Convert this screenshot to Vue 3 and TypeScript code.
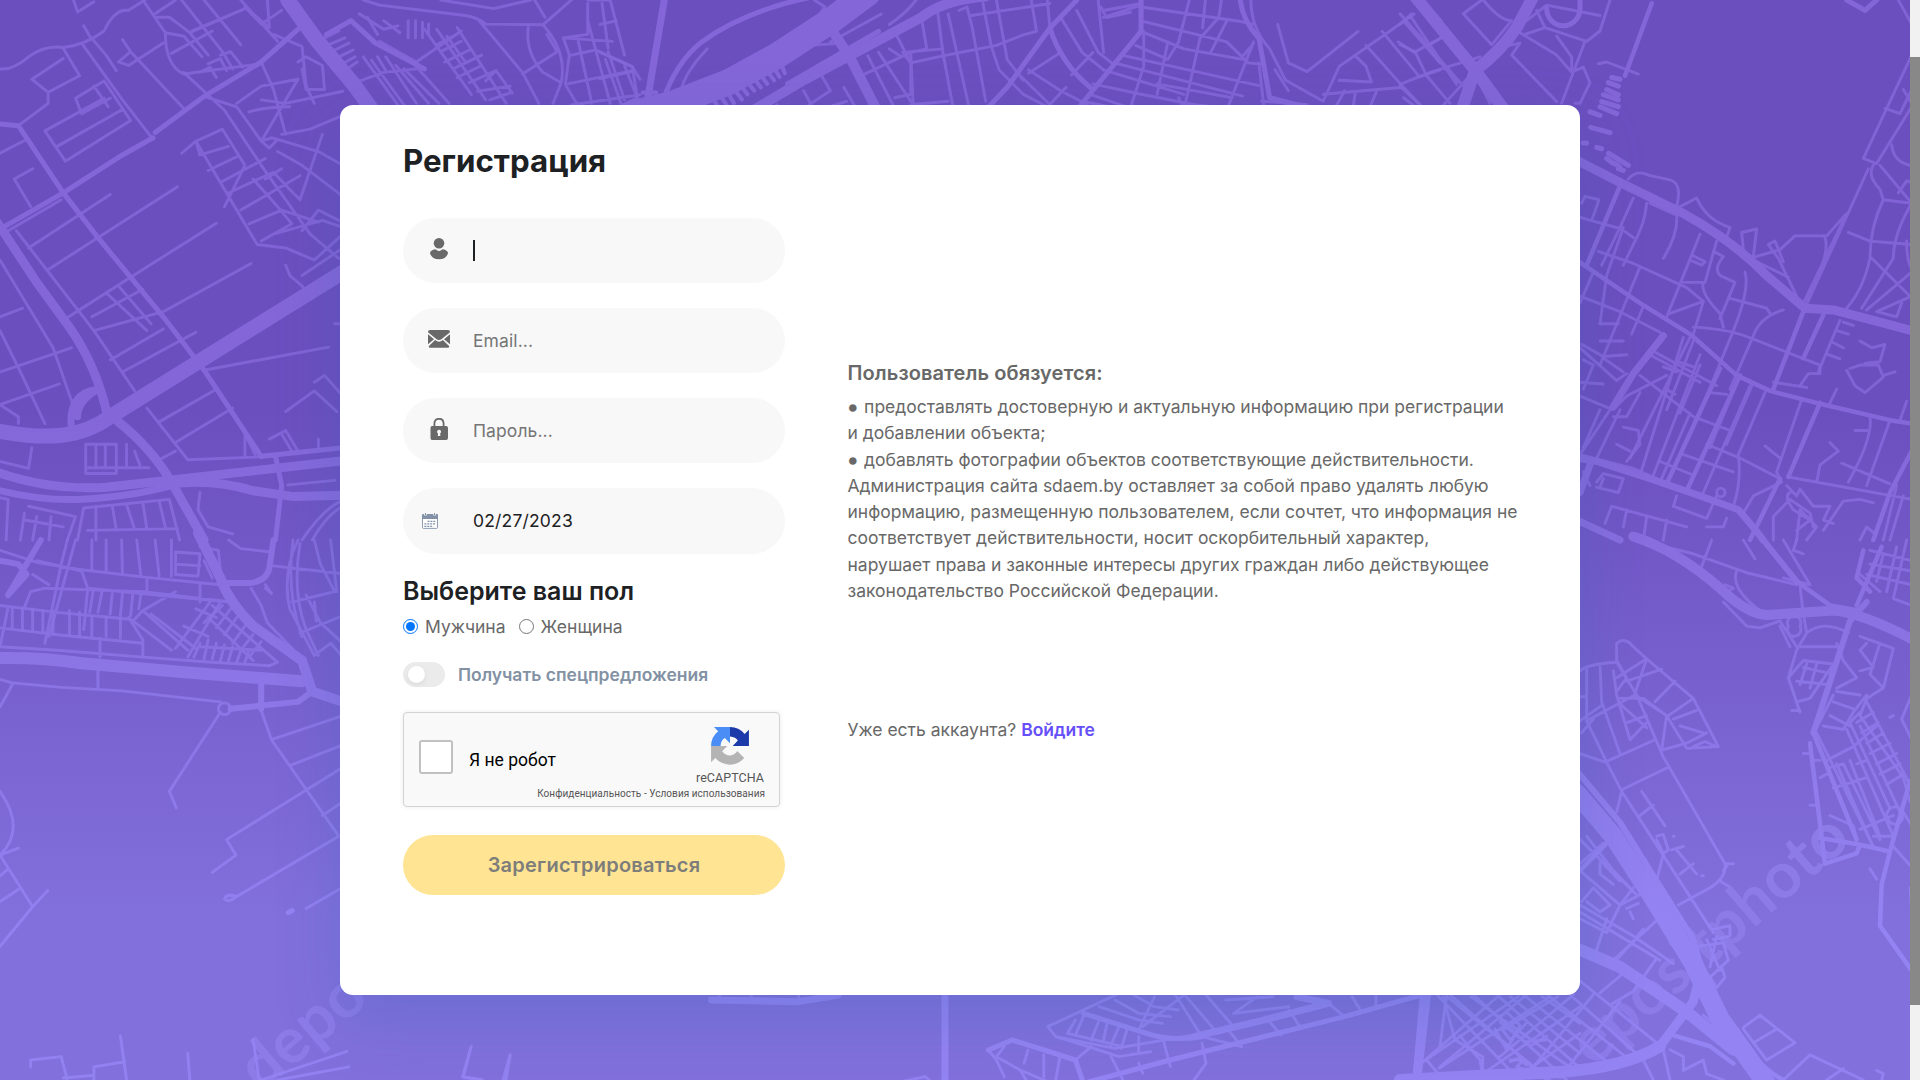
<script setup lang="ts">
import { ref } from 'vue'

interface Road { w: number; d: string }
interface Sheet { at: string; roads: Road[] }

const gender = ref('m')
const rules = [
  { dot: true, text: 'предоставлять достоверную и актуальную информацию при регистрации' },
  { dot: false, text: 'и добавлении объекта;' },
  { dot: true, text: 'добавлять фотографии объектов соответствующие действительности.' },
  { dot: false, text: 'Администрация сайта sdaem.by оставляет за собой право удалять любую' },
  { dot: false, text: 'информацию, размещенную пользователем, если сочтет, что информация не' },
  { dot: false, text: 'соответствует действительности, носит оскорбительный характер,' },
  { dot: false, text: 'нарушает права и законные интересы других граждан либо действующее' },
  { dot: false, text: 'законодательство Российской Федерации.' },
]

// The city map is split into sheets, each with its own local coordinate grid.
const sheets: Sheet[] = [
  {
    at: 'scale(.40816 .34439)',
    roads: [
      { w: 15, d: 'M705 0L775 115L870 250L915 325' },
      { w: 15, d: 'M-10 1250C120 1280 200 1270 270 1210L480 1055L840 790' },
      { w: 9, d: 'M-10 640L90 820L170 950Q235 1060 262 1200M410 1395L840 1338' },
      { w: 9, d: 'M-10 1370Q120 1425 260 1415L410 1395M420 1405Q520 1390 620 1425L720 1442L840 1438M290 1225Q370 1300 420 1400L500 1568' },
      { w: 7, d: 'M-10 1422Q100 1455 200 1450Q330 1440 420 1410M175 1245Q165 1140 240 1130M190 1210Q190 1165 240 1130' },
      { w: 5, d: 'M380 385L500 280L640 180L730 85M0 665L155 560L300 450L375 400M675 1325L690 1410L675 1568M800 100L860 60L920 125L1040 200M640 1325L840 1300M0 360L45 365L155 560L240 690L400 920L500 1075L640 1325' },
      { w: 3, d: 'M0 200Q30 205 70 165Q110 130 155 138Q210 130 255 90Q280 25 315 30L355 0M180 0L190 35L230 5M155 140L195 220L118 268L78 230L155 170M118 268L118 300L45 365M205 75L220 105L260 160L285 205M200 125L300 290L375 405M255 235L320 350L160 468L110 380L255 285M255 235L185 285L200 330L270 285M140 425L300 318M230 250L265 310M300 115L320 150L290 180L315 190L400 125M320 150L450 315M350 0L405 95Q405 190 450 215L640 185M405 95L450 105L495 165M385 50L415 50L465 95L600 25M465 95L510 160M420 155L520 90M445 0L545 150L570 200M500 0L590 130M590 0L680 120M600 20L640 70L690 30M655 0L660 80L620 40M380 40L430 0M470 90L590 30M490 210L515 195L530 225M510 185L540 170L555 205M540 160L565 150L595 195' },
      { w: 3, d: 'M450 210L550 320L640 480L760 680L830 750M500 280L580 310L640 410L730 230L640 250L580 300M640 180L670 260L700 390M670 100L740 135L750 250L770 300M730 180L750 165L790 190L795 260L750 260L740 200M640 290L700 300L840 265M690 390L760 375L840 335M610 325Q650 310 710 310M480 410L545 375L600 480L550 600M480 410L530 510L630 710L700 720L770 755L840 680M445 445L480 410L490 450L560 425M510 495L580 455M540 530L650 460M560 560L670 500L710 550L735 580L790 390M590 610L735 510M610 650L690 610L780 645M640 700L715 650L680 600L620 520M670 680L790 640L840 660M640 410L660 430L680 405L665 400L640 410M680 405L780 440L840 480M680 440L740 480L840 570M690 490L650 520M740 670L780 610L830 640M700 770L710 800L740 830L760 870M740 800L840 720' },
      { w: 3, d: 'M0 445L65 405M35 520L80 490M35 520L75 600M20 670L150 580M40 670L230 960L330 1135M70 720L270 565M115 785L435 542M155 930L320 805L530 648M230 960L400 905L615 765M270 1045L400 955M300 1080L480 965M260 850L360 960M290 830L370 940M225 920L350 840M300 1080L440 990M700 1195L770 1135L825 1195M770 1110L795 1090L840 1150M500 1075L805 1008M390 1225L530 1130M430 1285L570 1185M360 1185L460 1335L675 1325M600 1325L600 1260L625 1320M660 1275L700 1250L730 1310M690 1260L715 1310M780 1275L780 1300M390 1335L430 1310M0 920L55 895M0 755L130 1010L180 1180M0 960L50 1080L110 1230M0 1080L50 1060L175 1010M0 1175L145 1115M0 1175L45 1210L45 1230M0 1340L70 1360L78 1300' },
      { w: 3, d: 'M210 1290L285 1290L285 1375L210 1375ZM235 1290V1360M258 1290V1360M310 1290V1360M330 1310L345 1358M210 1358L365 1358M205 1475L415 1450L440 1568M205 1475L190 1568M235 1470V1568M275 1468L285 1540M310 1465L330 1538M350 1460L360 1538M390 1455L405 1530M215 1540L435 1535M0 1445L20 1450L15 1568M70 1470L185 1500L165 1568M60 1490L50 1568M90 1500L80 1568M125 1500L120 1568M60 1510L155 1530M490 1430L485 1480L510 1530L570 1550M705 1408L820 1395M740 1568Q790 1480 835 1455M765 1568Q800 1495 840 1470M820 940H840' },
      { w: 3, d: 'M795 110L830 90M805 130L845 110M815 148L855 125M825 168L865 145M835 188L870 165M845 205L875 180M890 165L975 305M910 175L990 305M925 165L945 205M945 165L1020 300M970 190L1050 300M990 200L1075 300M1010 180L1100 300M870 240L940 210L1020 200M880 40L940 85L975 75M900 50L925 100M940 60L980 95M1000 60V110M1018 60V110M1035 65V110M1050 70V100M930 120L1020 180L1130 90M1040 85L1155 275M1070 85L1190 290M1095 105L1140 180M1120 80L1180 190L1240 300M1070 130L1110 105M1080 150L1130 120M1090 180L1150 145M1110 200L1180 160M1120 225L1180 190M1150 240L1215 205M1170 265L1250 250M1190 235L1215 205L1255 270M1200 290L1250 270' },
      { w: 3, d: 'M890 0L930 15L1140 45Q1170 50 1190 70L1330 72L1400 0M1080 0L1210 25L1300 0M1170 55L1280 210L1320 300M1295 75Q1285 150 1330 210L1375 240L1355 300M1330 72Q1390 150 1375 240M1310 0L1335 50M1340 100L1365 150L1280 215M1440 0L1495 0L1530 160M1440 10L1440 100L1380 110L1395 160L1385 245L1415 305M1380 110L1500 120M1400 160L1460 145L1550 195L1568 230M1385 245L1550 205M1415 110L1450 300M1440 60L1495 300M1475 10L1490 140M1490 150L1530 290M1530 190L1560 280M1400 305L1568 275' },
    ],
  },
  {
    at: 'translate(0 540) scale(.40816 .34439)',
    roads: [
      { w: 12, d: 'M-10 343Q100 340 200 358L460 385L740 410' },
      { w: 10, d: 'M485 -20L540 110Q560 180 620 250L740 350L765 440L840 470' },
      { w: 6, d: 'M540 125H610Q655 120 660 80L670 0M0 60L45 70L65 100L20 160M100 0L20 160M640 420V490M565 490L730 470L765 440' },
      { w: 3, d: 'M0 30L90 65L190 85L370 110L540 130M185 0L120 280M165 0L150 70L110 300M90 60L200 90L215 140L205 260M60 195L75 150L110 140L350 150L565 180M80 100L120 130M0 190L140 210L320 230L420 320M20 195L0 310L140 320L350 340L520 355L660 365M360 110V150M490 130V180M215 140L560 180M420 0V105M225 0L225 90M260 0V95M298 0L300 100M335 0L345 105M380 0L390 105M430 35L490 40L485 105L430 100ZM430 70L490 75M350 205L430 150M350 205L460 320M370 215L480 315M460 340L540 180M430 315L515 180M450 250L510 280M480 200L530 225M315 225L350 290V340M0 255L140 275L350 300M245 285V340M330 230L350 205' },
      { w: 3, d: 'M30 200V255M55 200V260M80 200V262M105 205V265M130 205V270M170 205V275M195 210V280M228 150L220 210M250 150L240 210M275 155L270 215M300 155L295 220M325 160L320 220M345 160L340 200M225 225V280M260 225V280M295 230V285M490 310L640 320M510 290L500 345M530 300L520 345M550 305L540 350M570 310L560 350M590 320L580 355M610 320L600 355M490 300L475 340M520 190L680 355L660 365M510 225L620 350M545 190L500 240M565 200L530 255M580 225L550 275M600 250L570 300M620 275L590 320M640 295L610 340M560 0L590 25L665 35M490 20L535 30L540 90M500 60L520 110M615 140L640 190L655 240L720 320M650 140L665 155L650 130M670 75L840 98M730 0Q690 100 710 200L770 335M718 0Q700 150 740 280M735 10Q715 150 750 260L780 335M770 0L785 70L820 150M810 0L820 100L825 150M715 180L820 150M735 270L840 220M770 335L810 300L840 340M750 160L785 240L840 300M770 180L775 235' },
      { w: 3, d: 'M0 405L30 415L150 428L300 438L500 465L540 470M30 420L0 485M240 350V430M540 500L415 730L432 778M565 490A15 17 0 1 1 535 490A15 17 0 1 1 565 490M640 495L665 580L830 860M665 580L840 510M710 655L840 595M790 800L840 760M840 660L555 870L578 915L520 965M830 860L580 1035Q560 1055 550 1042Q555 1025 580 1035M750 1070L840 1008M0 730Q65 840 0 915L45 895M0 915L80 1065L0 1180M80 1065L117 1018M0 975L20 955M0 1050L45 1015M75 1530V1510L150 1500L165 1568M155 1562L225 1555M230 1568V1530L305 1515M295 1440L310 1568M460 1490L465 1568M620 1450L635 1568M640 1568L850 1485M680 1568L855 1530M1155 1470L1135 1560L1180 1568M1250 1495L1240 1568' },
      { w: 5, d: 'M706 1082L716 1076' },
    ],
  },
  {
    at: 'translate(1400 0) scale(.33333 .34439)',
    roads: [
      { w: 12, d: 'M45 -10L230 210L310 315M400 -10L350 80Q300 150 225 205L190 305' },
      { w: 9, d: 'M530 465L660 530L850 620Q1000 700 1100 800L1215 895L1300 900L1400 925L1535 960' },
      { w: 7, d: 'M530 1330L590 1340L750 1390L900 1440L1015 1480Q1060 1530 1090 1568M640 1180L700 1085L790 975M530 1510L660 1568M570 1350L540 1430' },
      { w: 4.5, d: 'M755 10L675 220M530 755L720 880L870 970L1010 1090L1110 1135L1250 1170L1470 1220L1535 1230M660 540L560 770M800 1405L960 1070M860 1425L1020 1090M1260 1170L1165 1385M1140 1390L1050 1568M1535 1310L1470 1430L1420 1568M1210 905L1120 1130M1270 915L1210 1040' },
      { w: 3, d: 'M250 0Q300 60 335 60L275 130L190 40L245 0M0 40L190 250M0 130L45 150L80 220L150 300M0 245L90 210L240 165M90 130L130 105M55 100L170 240M0 70L35 40M30 45L170 245M0 250L60 305M130 305L200 230M235 235L270 300M310 135L360 125L335 160L400 225L470 295M360 95L470 160L515 210M375 100L435 80L560 120L600 90L630 0M380 60L440 15L600 45M410 30L435 80M470 105L515 165V205M485 300L555 120M525 205L550 195L570 240L540 300L525 300M595 185L620 180L715 215' },
      { w: 5, d: 'M440 25A45 45 0 0 0 540 25V0M1340 0L1395 30L1430 0M635 225L660 230M625 240L655 250M620 260L655 275M610 275L655 290M605 295L655 310M600 310L650 330M570 325L600 335M572 370L630 385M550 415H560M590 428L605 432M625 445L685 480M620 460L640 475M645 475L660 485M655 490L670 495' },
      { w: 3, d: 'M685 520Q710 490 750 510L800 520Q850 525 830 600M830 605L890 575Q920 640 990 660L980 690M1030 725L1025 675L1070 665L1060 745M1050 750L1140 725L1185 685L1280 685L1340 620L1210 880M1535 160L1390 460L1430 475L1535 310M1455 315L1500 330L1535 260M1405 490L1215 895M1105 710L1135 750L1200 880M1105 710L1125 700L1150 760M1060 755L1165 805M1275 690Q1290 730 1240 830L1215 895M1420 480Q1400 510 1440 550L1450 580L1535 590M1440 480L1535 590M1475 420Q1480 470 1530 480M1495 560L1520 525L1535 530M1450 580Q1410 660 1410 750Q1390 840 1340 895M1345 675L1410 700L1535 710M1535 590Q1480 680 1480 750L1385 895M1410 745L1530 860M1535 790L1400 900M1535 860L1430 905L1490 920L1505 880M1520 700Q1520 760 1535 780M1510 260L1535 300M1495 0L1535 70' },
      { w: 3, d: 'M545 590L555 570L597 580L575 640M535 630L665 665L700 690M700 575L660 660L605 770M670 660L620 800L600 940M740 590Q735 650 700 710L670 770M750 590L830 625Q835 680 790 750M595 730L700 765L860 835L910 875M900 680L840 825L800 920M875 740L915 760L905 770L870 755M540 860L660 905L780 965M720 775L600 1060M730 890L695 970M540 880L580 790M810 910L910 875L880 970M910 820Q900 850 960 910L970 950M850 820H915L950 700M940 730L970 745Q940 780 960 800L1005 820L960 925M1035 790Q1050 840 1000 960L920 1150M985 865L1100 895L1110 910M880 950Q990 955 1060 985L1260 1060V1085H1225L1200 1120M1120 1110L1220 1125M1150 900Q1080 920 1060 975L990 1130M760 1020L950 1120M750 1030L900 1110M900 1030L760 1380M850 980L720 1380M870 980L690 1330M880 990L800 1190M790 1065L830 1080M800 1130L825 1145M835 1050L880 1065M900 1060L840 1200' },
      { w: 3, d: 'M540 1010L650 1105L680 1085M545 1000L610 1035L680 1030M550 1045L580 1060L550 1130M610 1040L670 1080M600 940L655 940M600 990H670M540 1110L610 1115M540 1150L640 1190L680 1150L800 1090M630 1190L540 1320M660 1190L590 1330M600 1190L550 1300M640 1210H680L720 1140M670 1240L715 1250L720 1290L680 1340M650 1290L690 1310M720 1090L880 1210L990 1250M870 1200L780 1400M930 1140L980 1145M920 1290L1020 1330L1140 1390M850 1320L1000 1370M780 1340L880 1380M1095 1140L1015 1320Q1025 1400 1000 1470M1020 1090L930 1300M1060 1110L980 1290M1050 1120L910 1430M1205 1160L1130 1370L1145 1400L1060 1440L1030 1490M1165 1385L1535 1450M1095 1295L1140 1330M1310 1130L1290 1170M1410 1210Q1420 1270 1345 1400M1470 1220L1400 1410M1325 1345L1470 1405M1290 1285L1315 1310L1260 1350L1250 1400M1365 1250H1405M1520 1165L1500 1220M1490 1410L1450 1568M1510 1440L1470 1568' },
      { w: 3, d: 'M1330 935L1360 945M1310 960L1345 970M1300 995L1330 1010M1285 1030L1320 1042M1320 930L1255 1080M1380 990L1415 1010L1455 1000L1440 1050L1395 1055M1350 1070L1380 1060L1435 1060L1450 1095L1395 1140L1365 1120L1340 1075M1450 1090L1485 1080M590 1400L610 1375L670 1390L655 1430L590 1415M610 1390L600 1415M615 1520L635 1470L860 1530M680 1480L670 1530M740 1500L730 1568M800 1510L790 1568M820 1470L830 1440M820 1470L920 1505L950 1440M920 1530L970 1530L980 1505M1160 1410L1190 1440L1200 1420L1240 1470L1290 1470L1270 1510L1300 1520M1120 1568V1500L1170 1450L1230 1490L1240 1530M1190 1568L1200 1480L1250 1530L1220 1568M1170 1430Q1150 1440 1180 1480L1230 1510L1190 1540M1270 1540L1330 1455L1380 1450L1420 1460M950 1430A10 10 0 1 0 975 1430A10 10 0 1 0 950 1430M1380 1568L1400 1530L1425 1550M540 1320L700 1360L780 1395M550 1370L570 1410' },
    ],
  },
  {
    at: 'translate(1400 540) scale(.33333 .34439)',
    roads: [
      { w: 19, d: 'M530 735L640 860L760 1040L880 1230L960 1390L1100 1580' },
      { w: 12, d: 'M0 1568L260 1555L480 1545Q680 1530 780 1470M540 1190L660 1240L860 1370L1000 1480' },
      { w: 10, d: 'M700 -10Q830 30 960 140Q1040 215 1100 218L1300 205Q1380 210 1540 290' },
      { w: 9, d: 'M80 1320L50 1568M780 1470L880 1340L900 1260' },
      { w: 6, d: 'M1090 0L1190 120M530 670L660 820L880 1160L900 1230M1400 180L1350 235L1240 560' },
      { w: 4.5, d: 'M1190 120L1290 190L1380 205M1240 560L1370 870M1230 590L1275 940L1370 910L1380 885L1470 905L1530 700M1390 30L1370 110L1410 150M1445 20L1370 190M1470 905L1445 1000L1440 1120L1535 1250M1260 865L1380 885M825 1440L930 1470L1000 1520M1010 1420Q1070 1530 1150 1568M640 860L540 960' },
      { w: 3, d: 'M540 380Q560 360 650 355L650 300Q675 280 700 310L740 345L880 460L955 600L860 605L800 510L705 450L560 525L620 645L665 730M650 355L710 450L790 630L975 940Q980 980 930 1010L835 1060M540 455H555M560 525V370M600 360L605 470L660 620M605 480L540 525M640 380L650 450L690 580M540 620L615 645L765 580M665 725L805 660M665 730L650 790M665 730L940 1140M705 445L740 345M680 410L785 375M650 400L740 345M765 470L825 410M805 510L880 460M820 520L890 495M840 540L910 560M800 510L785 610L860 590L920 560M650 350L680 400L650 440M660 460H730L800 510M665 480L740 545M680 530L740 510M690 580L740 530M880 600L915 585L950 600M545 560L580 520' },
      { w: 3, d: 'M725 730L795 830M720 800L760 770M770 860L790 855L805 900L790 910L770 870M790 910L770 990M830 900L890 970M840 970L880 940M815 900L850 890M905 975H910M820 860H822M985 940L970 960M980 940H1000M960 990L985 1005M1210 620H1225M1470 515L1480 510M1410 955L1430 985M1175 495H1200' },
      { w: 3, d: 'M710 0L880 40L1040 95L1190 130M935 0L900 90M1010 90Q990 140 1080 205M975 130L1000 140L980 150M970 180L1040 250L1080 255L1140 235M1030 0L1065 55M1150 0L1230 130L1150 110M1190 0L1180 30L1210 40M1140 250L1170 310M1210 215L1220 270L1190 320M1140 235L1190 310L1320 310M1165 250A20 20 0 1 0 1200 250A20 20 0 1 0 1165 250M1220 270Q1270 230 1345 270M1200 130L1210 220M1190 320L1165 400L1200 500M1165 400L1210 350L1300 360L1230 460L1190 470M1210 370L1300 390M1190 410L1290 420M1220 360L1200 420M1250 360L1230 430M1310 300L1330 350L1370 400L1310 430M1380 280L1480 315L1450 430L1400 460L1380 510L1510 690L1530 760M1400 300L1380 320L1420 370L1380 380M1440 300L1410 390L1450 430M1300 450L1250 545M1310 440L1380 450M1300 470L1360 490M1290 510L1350 540M1270 540L1330 550L1360 500L1400 450' },
      { w: 3, d: 'M1280 640L1360 600L1430 540M1340 550L1480 860M1380 540L1500 790M1380 500L1350 530L1470 780M1400 470L1535 720M1370 530L1420 500M1385 560L1435 530M1400 590L1450 560M1410 620L1470 590M1430 650L1490 620M1440 680L1500 650M1460 710L1510 680M1400 640L1370 650M1290 660L1330 650L1440 870M1260 690L1280 680M1300 720L1400 690M1250 560L1420 890M1310 650L1410 870M1350 640L1440 860M1380 840L1480 800M1370 870L1360 830L1290 800M1230 770H1250M1240 640H1260M1460 800A20 20 0 1 0 1510 800A20 20 0 1 0 1460 800M1510 790L1535 830M1480 890L1535 950M1535 450L1505 520L1535 580M1420 860L1480 860M1520 0L1480 170L1535 190M1400 100L1535 130M1410 70L1535 90M1450 40L1430 120M1490 20L1460 150M1380 100L1440 150M1410 30L1535 60M1530 1010L1535 1080' },
      { w: 3, d: 'M540 870L710 1030M560 860L640 960L700 1020M610 880L540 940M540 960L660 1060L700 1010M600 930L660 990M600 940V970L640 1000M545 1050L580 1010L630 1060L600 1080L560 1050M540 1060L700 1150L820 1230M540 1080L780 1220M620 1100L590 1190M770 1105L640 1220M730 1130L650 1220M770 1215L700 1310L630 1350M680 1250L600 1315M690 1080L700 1100M680 1070L715 1055M540 1100L620 1140L660 1060L720 1030M140 1320L120 1470M110 1320L330 1540M150 1320L440 1568M220 1320L500 1568M290 1320L560 1550M370 1320L640 1530M440 1320L690 1510M510 1320L720 1500M540 1280L770 1460M75 1510L300 1320M120 1530L380 1320M300 1500L520 1320M400 1530L580 1320M480 1560L660 1340M80 1510L130 1568M180 1440L240 1510L250 1568M280 1400L320 1370L360 1410L320 1480L285 1420M300 1400L390 1470L440 1440M330 1510L370 1510L350 1530L380 1540' },
      { w: 3, d: 'M890 1180L970 1170L985 1220L930 1270L890 1220M920 1160L960 1250M950 1150L930 1240M940 1130L990 1120V1150L940 1160M930 1270L950 1300L975 1270L965 1240M920 1340L980 1430M910 1380L1000 1450M1030 1415L1080 1380L1185 1460L1100 1510L1030 1420M1060 1460L1130 1420M1150 1568L1230 1495L1390 1568M1280 1568L1330 1535M1430 1540L1450 1550L1445 1568M790 1480L810 1568M810 1480L850 1500V1540L910 1510L920 1550L970 1568M730 1510L760 1568' },
    ],
  },
  {
    at: 'translate(600 0) scale(.5357 .3492)',
    roads: [
      { w: 26, d: 'M500 -20L430 60L330 160L240 235L130 300L60 325' },
      { w: 10, d: 'M720 -10Q640 0 600 50L380 230L270 330M430 80L465 160L520 325' },
      { w: 7, d: 'M120 0L85 320' },
      { w: 5, d: 'M400 -10Q270 30 190 120Q140 180 115 300M350 240L520 90M890 0L840 80L760 250L720 315M1195 0Q1200 60 1230 110L1250 280L1350 320M1530 0L1568 60M840 80Q860 180 915 250M1010 0L1010 90L890 315' },
      { w: 3, d: 'M200 140Q150 220 150 280M400 0L420 20L400 60L440 30M590 0Q570 40 540 70M525 40L430 120M390 130L440 125M630 30L640 150L660 315M600 50L610 140L580 150L585 315M650 40L690 315M670 30L685 20L695 80L720 290M690 45L840 10M715 10L730 130L745 200L790 270L840 310M740 0L760 170L790 230M805 0L815 90L790 100L740 130L640 160L580 180L565 150L640 140M550 90L580 180L580 270L550 280M520 150L580 290M500 160L550 310M540 140L560 160M490 215L580 150M580 300L650 290M380 260L400 315M415 220L430 260L390 300M455 250L480 315M410 315L460 290M330 300L340 315M860 50L900 150L940 200M890 30L930 150L955 180M780 210L840 300M800 200L860 260L910 300M835 0L840 80M860 150L800 210M920 150L880 215M870 250L830 315' },
      { w: 4, d: 'M340 190L345 210M325 195L335 220M313 205L325 230M300 215L312 240M288 225L300 250M275 235L288 260M263 245L275 270M250 255L265 285M238 265L250 295M225 275L238 305M212 285L222 312M80 265L105 265' },
      { w: 3, d: 'M930 0L940 150M940 30L1010 10M940 50L1010 15M935 20L945 50L990 35M1010 20L1190 60M1010 60L1170 120L1210 180L1240 185M1010 90L1090 140L1200 170M1000 130L1060 170L1080 120L1100 0M980 160L1230 245M960 180L1200 275M940 200L1090 270M920 240L1010 270L1110 300L1200 315M915 270L1000 315M900 290L980 315M1015 90V190L990 310M1130 0L1125 80M1160 0L1155 50L1120 110L1090 315M1170 60L1140 150M1060 120L1040 270M1220 120L1170 315M1190 60L1220 70M1200 160L1220 125M1040 240L1180 280M1080 280L1090 310M1215 0Q1215 80 1250 140L1280 230L1350 290L1380 190L1520 40M1265 70L1285 180L1320 205L1415 90M1230 180L1240 315M1260 200L1285 260M1380 230L1440 235L1430 190L1410 160M1430 130L1500 250L1350 270M1460 90L1530 220L1568 200M1500 60L1568 180M1490 120L1520 150L1568 110M1500 250L1540 315M1390 260L1370 315M1410 265L1405 315M1450 260L1435 315M1235 290L1320 300M1500 280L1530 315M0 150L60 190L70 280L30 310M0 225L60 205M0 70L30 60M10 170L40 300' },
    ],
  },
  {
    at: 'translate(340 980) scale(.7908 .3333)',
    roads: [
      { w: 7, d: 'M765 40V310M1370 40L1360 310M1080 170L1160 125L1250 70L1210 50M470 60L580 65L630 45' },
      { w: 5, d: 'M940 310L1050 240L1270 110L1390 30M940 100L1020 160Q1050 185 1090 170M820 210L850 180L930 240L940 310' },
      { w: 3, d: 'M480 45V65M520 45V65M580 45V65M985 40L895 140L905 170L980 205L1080 165M1000 40L1030 80L1060 90M980 60L1010 100L1050 110M960 80L1010 120L1040 130M930 120L920 160L990 200M940 110L930 165M960 120L950 180M970 130L965 185M985 140L975 195M995 150L988 205M905 170Q960 210 985 230L1025 215M1010 170V220M1015 140L1070 40M1055 40L1090 170M1070 50L1110 160M1030 50L1010 150M1095 45L1130 140M1090 170L1140 200L1120 140M1160 50L1130 100L1200 80M1120 60L1180 50M1170 110L1190 165M1200 90L1215 145M1250 70L1270 110M1280 50L1290 90M1310 45V80M1040 170L1050 260M1090 190L1095 250L1080 300M950 200L930 240M975 230L990 300M1010 250L1015 280M820 210L830 240L840 290M840 200L830 230L860 270L870 310M870 210L865 250M890 225V290M910 235L905 300M860 270L900 310M700 310L740 290L750 310M165 205L155 290L180 300M215 225L205 310M1395 50L1410 180L1445 230V310' },
      { w: 3, d: 'M1400 50L1530 300M1430 50L1560 270M1480 50L1568 220M1520 50L1568 130M1370 245L1490 50M1390 265L1530 50M1440 290L1568 80M1490 290L1568 160M1540 50L1470 150L1480 180L1500 130M1480 245L1490 235L1500 255M1500 185L1525 180' },
    ],
  },
]
</script>

<template>
  <main class="page">
    <svg class="map" viewBox="0 0 1920 1080" aria-hidden="true">
      <defs>
        <linearGradient id="lineTone" x1="0" y1="0" x2="0" y2="1">
          <stop offset="0" stop-color="#8466d8" />
          <stop offset=".38" stop-color="#8466d8" />
          <stop offset=".85" stop-color="#9483f2" />
          <stop offset="1" stop-color="#9483f2" />
        </linearGradient>
        <mask id="streets" maskUnits="userSpaceOnUse" x="0" y="0" width="1920" height="1080">
          <g fill="none" stroke="#fff" stroke-linecap="round" stroke-linejoin="round">
            <g v-for="(sheet, i) in sheets" :key="i" :transform="sheet.at">
              <path
                v-for="(road, j) in sheet.roads"
                :key="j"
                :d="road.d"
                :stroke-width="road.w === 3 ? 2.9 : road.w"
                :stroke-opacity="road.w === 3 ? 0.88 : 1"
                vector-effect="non-scaling-stroke"
              />
            </g>
          </g>
        </mask>
      </defs>
      <g class="watermark">
        <text transform="translate(371 1001) rotate(-40)">depo</text>
        <text transform="translate(1853 842) rotate(-41)">epositphoto</text>
      </g>
      <rect width="1920" height="1080" fill="url(#lineTone)" mask="url(#streets)" />
    </svg>

    <section class="card">
      <form class="form" @submit.prevent>
        <h1>Регистрация</h1>
        <label class="field">
          <svg class="ico" viewBox="0 0 22 22"><circle cx="11" cy="5.3" r="5.3" /><path d="M5.2 11.7Q7.8 10.9 8.5 12Q11 13.9 13.5 12Q14.2 10.9 16.8 11.7Q20 12.8 20 15.3Q18.2 21.2 11 21.3Q3.8 21.2 2 15.3Q2 12.8 5.2 11.7Z" /></svg>
          <span class="caret"></span>
        </label>
        <label class="field">
          <svg class="ico" viewBox="0 0 22 22"><path d="M0 4.2V4Q0 2 2 2H20Q22 2 22 4V4.2L14 10.7Q11 13.4 8 10.7ZM0 6.3L6 11.2L0 16.2ZM22 6.3L16 11.2L22 16.2ZM7.1 12.1Q11 15.6 14.9 12.1L21.3 18.2Q21 19.7 20 19.7H2Q1 19.7 .7 18.2Z" /></svg>
          <span class="hint">Email...</span>
        </label>
        <label class="field">
          <svg class="ico" viewBox="0 0 22 22"><path d="M6.4 9V5.7Q6.4 .8 11 .8Q15.6 .8 15.6 5.7V9" fill="none" stroke="#696969" stroke-width="1.8" /><path fill-rule="evenodd" d="M4 8H18Q20 8 20 10V20Q20 22 18 22H4Q2.5 22 2.5 20V10Q2.5 8 4 8ZM11 11.8A2 2 0 0 0 10 15.5L9.8 18H12.4L12.1 15.5A2 2 0 0 0 11 11.8Z" /></svg>
          <span class="hint">Пароль...</span>
        </label>
        <label class="field date">
          <svg class="cal" viewBox="0 0 16 16"><path d="M.5 2V14.3Q.5 15.4 1.5 15.4H14.5Q15.5 15.4 15.5 14.3V2" fill="#fff" stroke="#8291a8" stroke-width=".9" /><path d="M0 6V1.8Q0 1 1 1H2.2V2.5H4.7V1H11.3V2.5H13.8V1H15Q16 1 16 1.8V6Z" fill="#8291a8" /><path d="M3.5 0V2.2M12.5 0V2.2" stroke="#8291a8" /><path d="M5.5 8.3H13.8M2.4 10.8H13.8M2.4 13.3H11.2" fill="none" stroke="#8291a8" stroke-width="1.3" stroke-dasharray="2 .9" /></svg>
          <span class="value">02/27/2023</span>
        </label>
        <h2>Выберите ваш пол</h2>
        <div class="radios">
          <label><input v-model="gender" type="radio" value="m" /><span>Мужчина</span></label>
          <label><input v-model="gender" type="radio" value="f" /><span>Женщина</span></label>
        </div>
        <div class="offers"><span class="switch"><i></i></span><span class="offers-text">Получать спецпредложения</span></div>
        <div class="captcha">
          <span class="box"></span>
          <span class="robot">Я не робот</span>
          <div class="brand">
            <svg viewBox="0 0 64 64">
              <path d="M64 31.96A31 31 0 0 0 63.9 30.6V4.6L56.7 11.8A32 32 0 0 0 32 .1V15.9Q42 16.5 45.2 22.9L36.6 32H64Z" fill="#1c3aa9" />
              <path d="M32 .1H5L12.1 7.3A32 32 0 0 0 .1 32H16Q16.8 22 23.2 18.7L32 27.5Z" fill="#4a8df6" />
              <path d="M.1 32V59.2L7.3 52A32 32 0 0 0 56 52.4L44.2 40.6Q40.5 47.4 32 48Q23.5 47.6 18.8 40.8L27.5 32Z" fill="#b4b4b4" />
            </svg>
            <span class="brand-name">reCAPTCHA</span>
          </div>
          <span class="legal">Конфиденциальность - Условия использования</span>
        </div>
        <button type="submit">Зарегистрироваться</button>
      </form>

      <aside class="info">
        <h3>Пользователь обязуется:</h3>
        <p v-for="rule in rules" :key="rule.text"><span v-if="rule.dot" class="dot">●</span>{{ rule.text }}</p>
        <div class="login"><span>Уже есть аккаунта? </span><a>Войдите</a></div>
      </aside>
    </section>
    <div class="scroll"><i></i></div>
  </main>
</template>

<style>
html, body { margin: 0; overflow: hidden; }
</style>

<style scoped>
* { box-sizing: border-box; }
.page { position: relative; width: 1920px; height: 1080px; padding: 105px 340px 85px; overflow: hidden; background: linear-gradient(#6c4fbf 0%, #6c4fbf 38%, #8270dc 85%, #8270dc 100%); font-family: Inter, sans-serif; color: #1e2123; }
.map { position: absolute; inset: 0; width: 1920px; height: 1080px; }
.watermark { fill: #8d7be8; font: 700 64px Lato, sans-serif; text-anchor: end; }
.card { position: relative; display: flex; width: 1240px; height: 890px; padding: 0 62px 0 63px; border-radius: 13px; background: #fff; box-shadow: 0 25px 62px rgba(44, 100, 180, .25); }
.form { width: 382px; padding-top: 36px; }
h1 { height: 40px; margin: 0 0 37px; font-size: 31.25px; line-height: 40px; font-weight: 700; white-space: nowrap; }
.field { display: flex; align-items: center; height: 65px; margin-bottom: 25px; padding-left: 25px; border-radius: 33px; background: #f8f8f8; font-size: 17.5px; }
.ico { width: 22px; height: 22px; margin: 0 23px 3px 0; fill: #696969; }
.caret { width: 2px; height: 21px; background: #1e2123; }
.hint { color: #757575; letter-spacing: .1px; }
.date { height: 66px; margin-bottom: 0; padding-left: 19px; }
.cal { width: 16px; height: 16px; margin-right: 35px; }
.value { margin-bottom: 2px; letter-spacing: .18px; }
h2 { height: 30px; margin: 22px 0 0; font-size: 25px; line-height: 30px; font-weight: 600; white-space: nowrap; }
.radios { display: flex; height: 26px; margin-top: 7px; font-size: 17.5px; color: #686868; }
.radios label { display: flex; align-items: center; margin-right: 13px; }
.radios input { width: 15px; height: 15px; margin: 0 7px 0 0; accent-color: #0075ff; }
.offers { display: flex; align-items: center; height: 25px; margin-top: 23px; }
.switch { display: flex; align-items: center; width: 42px; height: 25px; padding-left: 5px; border-radius: 13px; background: #ebebeb; }
.switch i { width: 17px; height: 17px; border-radius: 50%; background: #fff; box-shadow: 0 2px 5px rgba(0, 0, 0, .08); }
.offers-text { margin-left: 13px; font-size: 17.5px; font-weight: 600; color: #8291a3; white-space: nowrap; }
.captcha { display: grid; grid-template-columns: 50px 1fr 70px; grid-template-rows: 70px 1fr; width: 377px; height: 95px; margin-top: 25px; padding: 0 14px 0 15px; border: 1px solid #d3d3d3; border-radius: 4px; background: #f9f9f9; box-shadow: 0 0 5px rgba(0, 0, 0, .08); font-family: Roboto, sans-serif; }
.box { width: 34px; height: 34px; margin-top: 27px; border: 2px solid #c1c1c1; border-radius: 3px; background: #fff; }
.robot { margin-top: 35px; font-size: 17.5px; line-height: 24px; color: #000; }
.brand { display: flex; flex-direction: column; align-items: center; padding-top: 14px; }
.brand svg { width: 38px; height: 38px; flex: none; }
.brand-name { margin-top: 5px; font-size: 12.5px; line-height: 15px; letter-spacing: .05px; color: #555; }
.legal { grid-column: 1 / 4; justify-self: end; margin-top: 2px; font-size: 10px; line-height: 18px; letter-spacing: .05px; color: #555; white-space: nowrap; }
button { display: block; width: 382px; height: 60px; margin-top: 28px; padding: 0; border: 0; border-radius: 30px; background: #ffe493; font: 600 20px Inter, sans-serif; letter-spacing: .22px; color: #7d7d7b; }
.info { margin-left: 62.5px; padding-top: 255px; color: #686868; white-space: nowrap; }
h3 { height: 26px; margin: 0 0 8px; font-size: 20px; line-height: 26px; font-weight: 600; letter-spacing: .08px; }
p { height: 26.25px; margin: 0; font-size: 17.5px; line-height: 26.25px; }
.dot { display: inline-block; width: 16.6px; font-family: "Liberation Sans", sans-serif; line-height: 20px; }
.login { margin-top: 113px; font-size: 17.5px; line-height: 26px; }
.login span { white-space: pre; }
.login a { font-weight: 600; color: #664ef9; }
.scroll { position: absolute; top: 0; right: 0; width: 10px; height: 1080px; padding-top: 57px; background: #f1f1f1; }
.scroll i { display: block; height: 948px; background: #888; }
</style>
